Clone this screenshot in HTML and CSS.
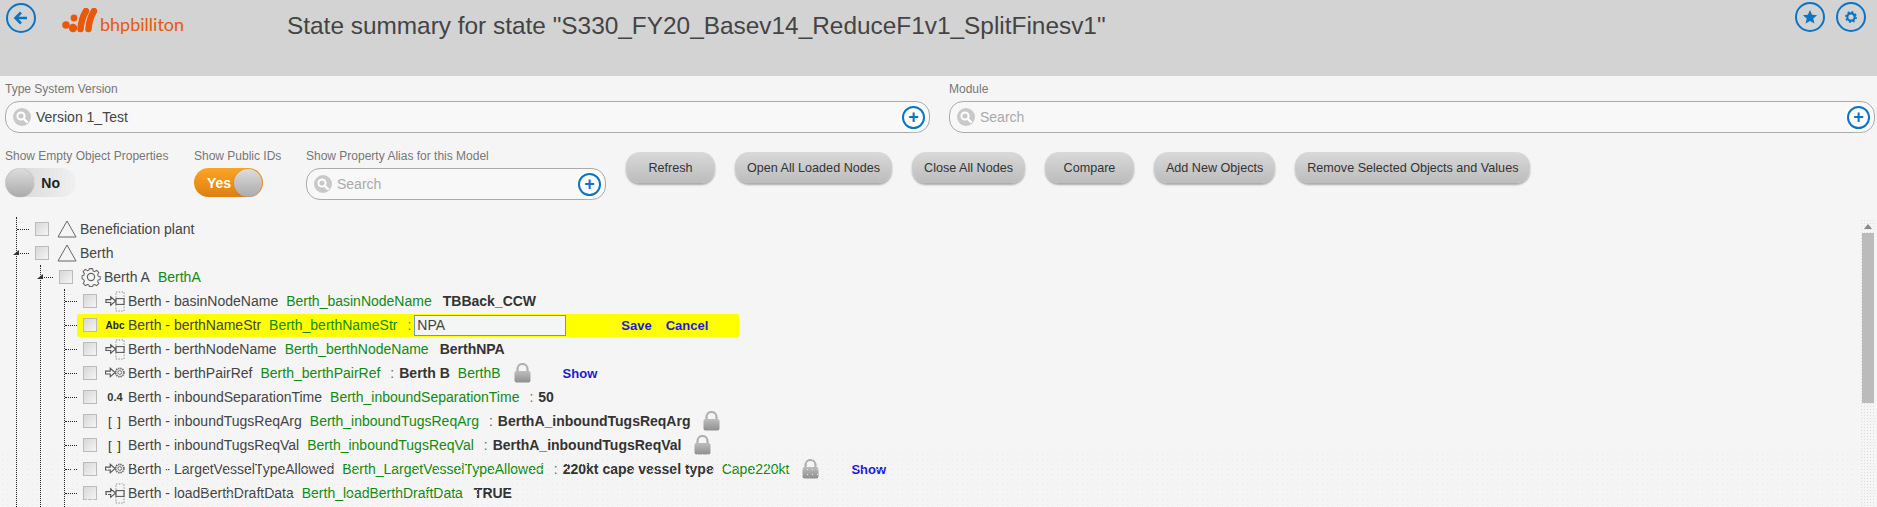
FILE: index.html
```html
<!DOCTYPE html>
<html lang="en">
<head>
    <meta charset="UTF-8">
    <title>State summary</title>
    <link rel="stylesheet" href="styles.css">
</head>
<body>
    <svg class="defs" width="0" height="0">
        <defs>
            <linearGradient id="lock-fill" x1="0" y1="0" x2="0" y2="1">
                <stop offset="0" stop-color="#bdbdbd"/>
                <stop offset="1" stop-color="#8f8f8f"/>
            </linearGradient>
        </defs>
        <symbol id="i-search" viewBox="0 0 18 18">
            <circle cx="9" cy="9" r="9" fill="#c9c9c9"/>
            <circle cx="8" cy="8" r="3.6" fill="none" stroke="#fff" stroke-width="2"/>
            <path d="M10.8 10.8L14 14" stroke="#fff" stroke-width="2.4" stroke-linecap="round"/>
        </symbol>
        <symbol id="i-lock" viewBox="0 0 17 20">
            <path d="M3.500 9V6a5 5 0 0 1 10 0v3" fill="none" stroke="#b0b0b0" stroke-width="2.200"/>
            <rect x="0.500" y="8" width="16" height="11.500" rx="2" fill="url(#lock-fill)"/>
        </symbol>
        <symbol id="i-gear" viewBox="0 0 20 20">
            <path d="M8.3 1.500h3.400l.5 2.500 1.700.7 2.100-1.400 2.400 2.400-1.400 2.100.7 1.700 2.100.5v3l-2.100.5-.7 1.700 1.400 2.100-2.400 2.400-2.100-1.400-1.700.7-.5 1.600H8.300l-.5-1.600-1.700-.7-2.100 1.400-2.400-2.400 1.400-2.100-.7-1.700L0.500 12V9l1.800-.5.7-1.700-1.400-2.100 2.400-2.400 2.100 1.400 1.700-.7z" transform="translate(0.600 0.200) scale(0.94)" fill="none" stroke="#666" stroke-width="1.100" stroke-linejoin="round"/>
            <circle cx="10" cy="10" r="3.600" fill="none" stroke="#666" stroke-width="1.200"/>
        </symbol>
        <symbol id="i-link-attr" viewBox="0 0 21 21">
            <path d="M1 8.500h5V5.500L11 10 6 14.500v-3H1z" fill="#f5f5f5" stroke="#555" stroke-width="1.200"/>
            <rect x="11.500" y="0.500" width="8.500" height="20" fill="none" stroke="#888" stroke-dasharray="1.500 1.500"/>
            <rect x="11.500" y="7.500" width="8.500" height="6" fill="none" stroke="#444"/>
        </symbol>
        <symbol id="i-link-node" viewBox="0 0 21 14">
            <path d="M0.500 5h5V2L10.500 6.500 5.500 11V8H0.500z" fill="#f5f5f5" stroke="#555" stroke-width="1.200"/>
            <circle cx="15.500" cy="6.500" r="4.400" fill="none" stroke="#666" stroke-width="1.800" stroke-dasharray="1.500 0.800"/>
            <circle cx="15.500" cy="6.500" r="2" fill="none" stroke="#666"/>
        </symbol>
    </svg>

    <header class="topbar">
        <button class="circle-btn back-btn" type="button">
            <svg width="18" height="18" viewBox="0 0 18 18"><path d="M15 9H4M9 3.500L3.500 9 9 14.500" fill="none" stroke="#0a75c4" stroke-width="2.600"/></svg>
        </button>
        <div class="logo">
            <svg width="35" height="26" viewBox="0 0 35 26">
                <circle cx="4" cy="17" r="3.800" fill="#e8590c"/>
                <circle cx="12" cy="10" r="3.400" fill="#e8590c"/>
                <circle cx="11" cy="20" r="4.200" fill="#e8590c"/>
                <path d="M24 3C21 8 19 14 18.500 21" fill="none" stroke="#e8590c" stroke-width="6.500" stroke-linecap="round"/>
                <path d="M32 3C29 8 27 14 26.500 21" fill="none" stroke="#e8590c" stroke-width="6.500" stroke-linecap="round"/>
            </svg>
            <span class="logo-text">bhpbilliton</span>
        </div>
        <h1 class="page-title">State summary for state "S330_FY20_Basev14_ReduceF1v1_SplitFinesv1"</h1>
        <div class="top-actions">
            <button class="circle-btn" type="button">
                <svg width="16" height="16" viewBox="0 0 16 16"><path d="M8 1l2.100 4.700 5 .5-3.800 3.300 1.100 5L8 11.900l-4.400 2.600 1.100-5L.9 6.200l5-.5z" fill="#0a75c4"/></svg>
            </button>
            <button class="circle-btn" type="button">
                <svg width="12" height="12" viewBox="0 0 12 12"><circle cx="6" cy="6" r="3.700" fill="none" stroke="#0a75c4" stroke-width="2.200"/><circle cx="6" cy="6" r="5" fill="none" stroke="#0a75c4" stroke-width="1.800" stroke-dasharray="1.900 2"/></svg>
            </button>
        </div>
    </header>

    <main class="content">
        <section class="fields">
            <div class="field">
                <label class="field-label">Type System Version</label>
                <div class="search-box">
                    <svg class="search-icon"><use href="#i-search"/></svg>
                    <span class="search-value">Version 1_Test</span>
                    <span class="plus-btn">+</span>
                </div>
            </div>
            <div class="field">
                <label class="field-label">Module</label>
                <div class="search-box">
                    <svg class="search-icon"><use href="#i-search"/></svg>
                    <span class="search-hint">Search</span>
                    <span class="plus-btn">+</span>
                </div>
            </div>
        </section>

        <section class="options">
            <div class="option option-empty">
                <label class="field-label">Show Empty Object Properties</label>
                <div class="toggle toggle-off"><span class="knob"></span><span>No</span></div>
            </div>
            <div class="option option-ids">
                <label class="field-label">Show Public IDs</label>
                <div class="toggle toggle-on"><span>Yes</span><span class="knob"></span></div>
            </div>
            <div class="option option-alias">
                <label class="field-label">Show Property Alias for this Model</label>
                <div class="search-box">
                    <svg class="search-icon"><use href="#i-search"/></svg>
                    <span class="search-hint">Search</span>
                    <span class="plus-btn">+</span>
                </div>
            </div>
            <div class="actions">
                <button class="action-btn" type="button">Refresh</button>
                <button class="action-btn" type="button">Open All Loaded Nodes</button>
                <button class="action-btn" type="button">Close All Nodes</button>
                <button class="action-btn" type="button">Compare</button>
                <button class="action-btn" type="button">Add New Objects</button>
                <button class="action-btn" type="button">Remove Selected Objects and Values</button>
            </div>
        </section>

        <section class="tree-panel">
            <ul class="tree">
                <li>
                    <div class="row"><span class="conn"></span><span class="check"></span>
                        <svg class="type-icon" width="20" height="18" viewBox="0 0 20 18"><path d="M10 1L19 17H1z" fill="none" stroke="#666"/></svg>
                        <span class="name">Beneficiation plant</span>
                    </div>
                </li>
                <li>
                    <div class="row"><span class="conn open"></span><span class="check"></span>
                        <svg class="type-icon" width="20" height="18" viewBox="0 0 20 18"><path d="M10 1L19 17H1z" fill="none" stroke="#666"/></svg>
                        <span class="name">Berth</span>
                    </div>
                    <ul>
                        <li>
                            <div class="row"><span class="conn open"></span><span class="check"></span>
                                <svg class="type-icon" width="20" height="20"><use href="#i-gear"/></svg>
                                <span class="name">Berth A</span><span class="alias">BerthA</span>
                            </div>
                            <ul class="props">
                                <li class="row"><span class="conn"></span><span class="check"></span>
                                    <svg class="type-icon" width="21" height="21"><use href="#i-link-attr"/></svg>
                                    <span class="name">Berth - basinNodeName</span><span class="alias">Berth_basinNodeName</span><b class="value">TBBack_CCW</b>
                                </li>
                                <li class="row row-edit"><span class="conn"></span><span class="check"></span>
                                    <span class="type-icon type-text type-abc">Abc</span>
                                    <span class="name">Berth - berthNameStr</span><span class="alias">Berth_berthNameStr</span><span class="colon">:</span>
                                    <input class="edit-input" type="text" value="NPA">
                                    <a class="link link-save">Save</a><a class="link link-cancel">Cancel</a>
                                </li>
                                <li class="row"><span class="conn"></span><span class="check"></span>
                                    <svg class="type-icon" width="21" height="21"><use href="#i-link-attr"/></svg>
                                    <span class="name">Berth - berthNodeName</span><span class="alias">Berth_berthNodeName</span><b class="value">BerthNPA</b>
                                </li>
                                <li class="row"><span class="conn"></span><span class="check"></span>
                                    <svg class="type-icon" width="21" height="14"><use href="#i-link-node"/></svg>
                                    <span class="name">Berth - berthPairRef</span><span class="alias">Berth_berthPairRef</span><span class="colon">:</span><b class="value-tight">Berth B</b><span class="alias">BerthB</span>
                                    <svg class="lock" width="17" height="20"><use href="#i-lock"/></svg>
                                    <a class="link link-show">Show</a>
                                </li>
                                <li class="row"><span class="conn"></span><span class="check"></span>
                                    <span class="type-icon type-text">0.4</span>
                                    <span class="name">Berth - inboundSeparationTime</span><span class="alias">Berth_inboundSeparationTime</span><span class="colon">:</span><b class="value-tight">50</b>
                                </li>
                                <li class="row"><span class="conn"></span><span class="check"></span>
                                    <span class="type-icon type-text type-array">[ ]</span>
                                    <span class="name">Berth - inboundTugsReqArg</span><span class="alias">Berth_inboundTugsReqArg</span><span class="colon">:</span><b class="value-tight">BerthA_inboundTugsReqArg</b>
                                    <svg class="lock" width="17" height="20"><use href="#i-lock"/></svg>
                                </li>
                                <li class="row"><span class="conn"></span><span class="check"></span>
                                    <span class="type-icon type-text type-array">[ ]</span>
                                    <span class="name">Berth - inboundTugsReqVal</span><span class="alias">Berth_inboundTugsReqVal</span><span class="colon">:</span><b class="value-tight">BerthA_inboundTugsReqVal</b>
                                    <svg class="lock" width="17" height="20"><use href="#i-lock"/></svg>
                                </li>
                                <li class="row"><span class="conn"></span><span class="check"></span>
                                    <svg class="type-icon" width="21" height="14"><use href="#i-link-node"/></svg>
                                    <span class="name">Berth - LargetVesselTypeAllowed</span><span class="alias">Berth_LargetVesselTypeAllowed</span><span class="colon">:</span><b class="value-tight">220kt cape vessel type</b><span class="alias">Cape220kt</span>
                                    <svg class="lock" width="17" height="20"><use href="#i-lock"/></svg>
                                    <a class="link link-show">Show</a>
                                </li>
                                <li class="row"><span class="conn"></span><span class="check"></span>
                                    <svg class="type-icon" width="21" height="21"><use href="#i-link-attr"/></svg>
                                    <span class="name">Berth - loadBerthDraftData</span><span class="alias">Berth_loadBerthDraftData</span><b class="value">TRUE</b>
                                </li>
                            </ul>
                        </li>
                    </ul>
                </li>
            </ul>
            <div class="scrollbar">
                <span class="scroll-up"></span>
                <span class="scroll-thumb"></span>
            </div>
        </section>
    </main>
</body>
</html>
```

FILE: styles.css
```css
html, body {
    margin: 0;
    height: 507px;
    overflow: hidden;
}
body {
    font-family: "Liberation Sans", Arial, sans-serif;
    background-color: #f5f5f5;
    color: #444;
}
.defs {
    display: block;
    height: 0;
}
ul {
    list-style: none;
    margin: 0;
    padding: 0;
}

/* top bar */
.topbar {
    display: flex;
    align-items: flex-start;
    height: 76px;
    background-color: #d3d3d3;
    box-sizing: border-box;
    padding: 3px 11px 0 6px;
}
.circle-btn {
    display: flex;
    align-items: center;
    justify-content: center;
    width: 30px;
    height: 30px;
    padding: 0;
    border: 2px solid #0a75c4;
    border-radius: 50%;
    background: transparent;
    box-sizing: border-box;
}
.back-btn {
    flex: none;
}
.logo {
    display: flex;
    align-items: flex-end;
    gap: 2px;
    width: 225px;
    margin-left: 26px;
    padding-top: 5px;
    flex: none;
    box-sizing: border-box;
}
.logo-text {
    color: #e8590c;
    font-family: Lato, "Liberation Sans", sans-serif;
    font-size: 18px;
    line-height: 20px;
    margin-left: 1px;
}
.page-title {
    margin: 8px 0 0;
    font-size: 24.4px;
    line-height: 30px;
    font-weight: normal;
    color: #444;
    flex: 1;
    white-space: nowrap;
}
.top-actions {
    display: flex;
    gap: 11px;
    margin-top: -1px;
}

/* form area */
.content {
    display: flex;
    flex-direction: column;
    height: 431px;
}
.field-label {
    display: block;
    font-size: 12px;
    line-height: 14px;
    color: #777;
}
.fields {
    display: grid;
    grid-template-columns: 925px 926px;
    column-gap: 19px;
    padding: 6px 0 0 5px;
}
.field .field-label {
    margin-bottom: 5px;
}
.search-box {
    display: flex;
    align-items: center;
    height: 32px;
    box-sizing: border-box;
    padding: 0 4px 0 7px;
    border: 1px solid #aaa;
    border-radius: 14px;
    background-color: #f8f8f8;
    font-size: 14px;
}
.search-icon {
    width: 18px;
    height: 18px;
    flex: none;
}
.search-value {
    margin-left: 5px;
    flex: 1;
    color: #444;
}
.search-hint {
    margin-left: 5px;
    flex: 1;
    color: #aaa;
}
.plus-btn {
    display: flex;
    align-items: center;
    justify-content: center;
    width: 23px;
    height: 23px;
    box-sizing: border-box;
    border: 2px solid #0a75c4;
    border-radius: 50%;
    background-color: #fff;
    box-shadow: 0 0 3px 2px #fff;
    color: #0a75c4;
    font-size: 18px;
    font-weight: bold;
    line-height: 1;
}

.options {
    display: flex;
    align-items: flex-start;
    padding: 16px 0 0 5px;
}
.option .field-label {
    margin-bottom: 5px;
}
.option-empty {
    width: 189px;
}
.option-ids {
    width: 112px;
}
.option-alias {
    width: 300px;
}
.toggle {
    display: flex;
    align-items: center;
    justify-content: space-between;
    height: 29px;
    box-sizing: border-box;
    border-radius: 15px;
    padding: 0 1px;
    font-size: 14px;
    font-weight: bold;
}
.toggle-off {
    width: 71px;
    padding-right: 16px;
    background: linear-gradient(90deg, #d5d5d5, #f0f0f0);
    color: #222;
}
.toggle-on {
    width: 69px;
    padding-left: 13px;
    background: linear-gradient(#fba523, #de7f12);
    color: #fff;
}
.knob {
    width: 28px;
    height: 28px;
    border-radius: 50%;
    background: linear-gradient(#dcdcdc, #aaa);
    box-shadow: 0 0 1px #777;
}
.actions {
    display: flex;
    gap: 20px;
    margin-left: 20px;
    margin-top: 3px;
}
.action-btn {
    min-width: 89px;
    height: 31px;
    padding: 0 12px;
    border: none;
    border-radius: 14px;
    background: linear-gradient(#d9d9d9, #bcbcbc);
    box-shadow: 0 2px 2px #aaa;
    font-family: "Liberation Sans", Arial, sans-serif;
    font-size: 12.6px;
    color: #333;
    white-space: nowrap;
}

/* tree */
.tree-panel {
    position: relative;
    display: flex;
    flex: 1;
    min-height: 0;
    margin-top: 17px;
    overflow: hidden;
}
.tree-panel::after {
    content: "";
    position: absolute;
    left: 0;
    right: 17px;
    bottom: 0;
    height: 55px;
    background-image: radial-gradient(#e9e9e9 0.7px, transparent 0.9px);
    background-size: 5px 5px;
    pointer-events: none;
}
.tree {
    flex: 1;
    margin-left: 16px;
    border-left: 1px dotted #222;
    align-self: flex-start;
}
.tree ul {
    margin-left: 23px;
    border-left: 1px dotted #222;
}
.tree .props {
    padding-bottom: 30px;
}
.row {
    display: flex;
    align-items: center;
    height: 24px;
    font-size: 14px;
    white-space: nowrap;
}
.conn {
    position: relative;
    width: 12px;
    margin-right: 6px;
    border-top: 1px dotted #222;
    flex: none;
}
.conn.open::before {
    content: "";
    position: absolute;
    left: -4px;
    top: -4px;
    border-style: solid;
    border-width: 0 0 5px 6px;
    border-color: transparent transparent #333 transparent;
}
.check {
    width: 14px;
    height: 14px;
    box-sizing: border-box;
    border: 1px solid #bbb;
    background: linear-gradient(135deg, #d8d8d8, #f4f4f4);
    flex: none;
}
.type-icon {
    flex: none;
    margin: 0 3px 0 8px;
    width: 20px;
}
.type-text {
    text-align: center;
    font-size: 11px;
    font-weight: bold;
    color: #333;
}
.type-abc {
    font-size: 10px;
    color: #222;
}
.type-array {
    font-size: 13px;
    font-weight: normal;
    letter-spacing: 1px;
}
.name {
    color: #444;
}
.alias {
    margin-left: 8px;
    color: #118a11;
}
.value {
    margin-left: 11px;
    font-size: 14px;
    color: #333;
}
.colon {
    margin-left: 10px;
    color: #666;
}
.value-tight {
    margin-left: 5px;
    color: #333;
}
.lock {
    margin-left: 13px;
    flex: none;
}
.link {
    font-size: 13px;
    font-weight: bold;
    color: #1a1ad8;
}
.link-show {
    margin-left: 32px;
}
.row-edit {
    position: relative;
}
.row-edit::before {
    content: "";
    position: absolute;
    left: 12px;
    top: 1px;
    width: 662px;
    height: 23px;
    background-color: #ffff00;
    border-radius: 2px;
    z-index: -1;
}
.edit-input {
    width: 152px;
    height: 21px;
    box-sizing: border-box;
    margin-left: 3px;
    padding: 0 2px;
    border: 1px solid #6f94c8;
    background-color: #f5f5f5;
    font-family: "Liberation Sans", Arial, sans-serif;
    font-size: 14px;
    color: #444;
}
.link-save {
    margin-left: 55px;
}
.link-cancel {
    margin-left: 14px;
}
.scrollbar {
    display: flex;
    flex-direction: column;
    align-items: center;
    width: 15px;
    margin: 2px 2px 0 0;
    background-image: radial-gradient(#ddd 0.6px, transparent 0.8px);
    background-size: 3px 3px;
    flex: none;
}
.scroll-up {
    margin-top: 5px;
    border-style: solid;
    border-width: 0 4px 5px;
    border-color: transparent transparent #888;
}
.scroll-thumb {
    width: 12px;
    height: 170px;
    margin-top: 4px;
    background-color: #bbb;
}
```
